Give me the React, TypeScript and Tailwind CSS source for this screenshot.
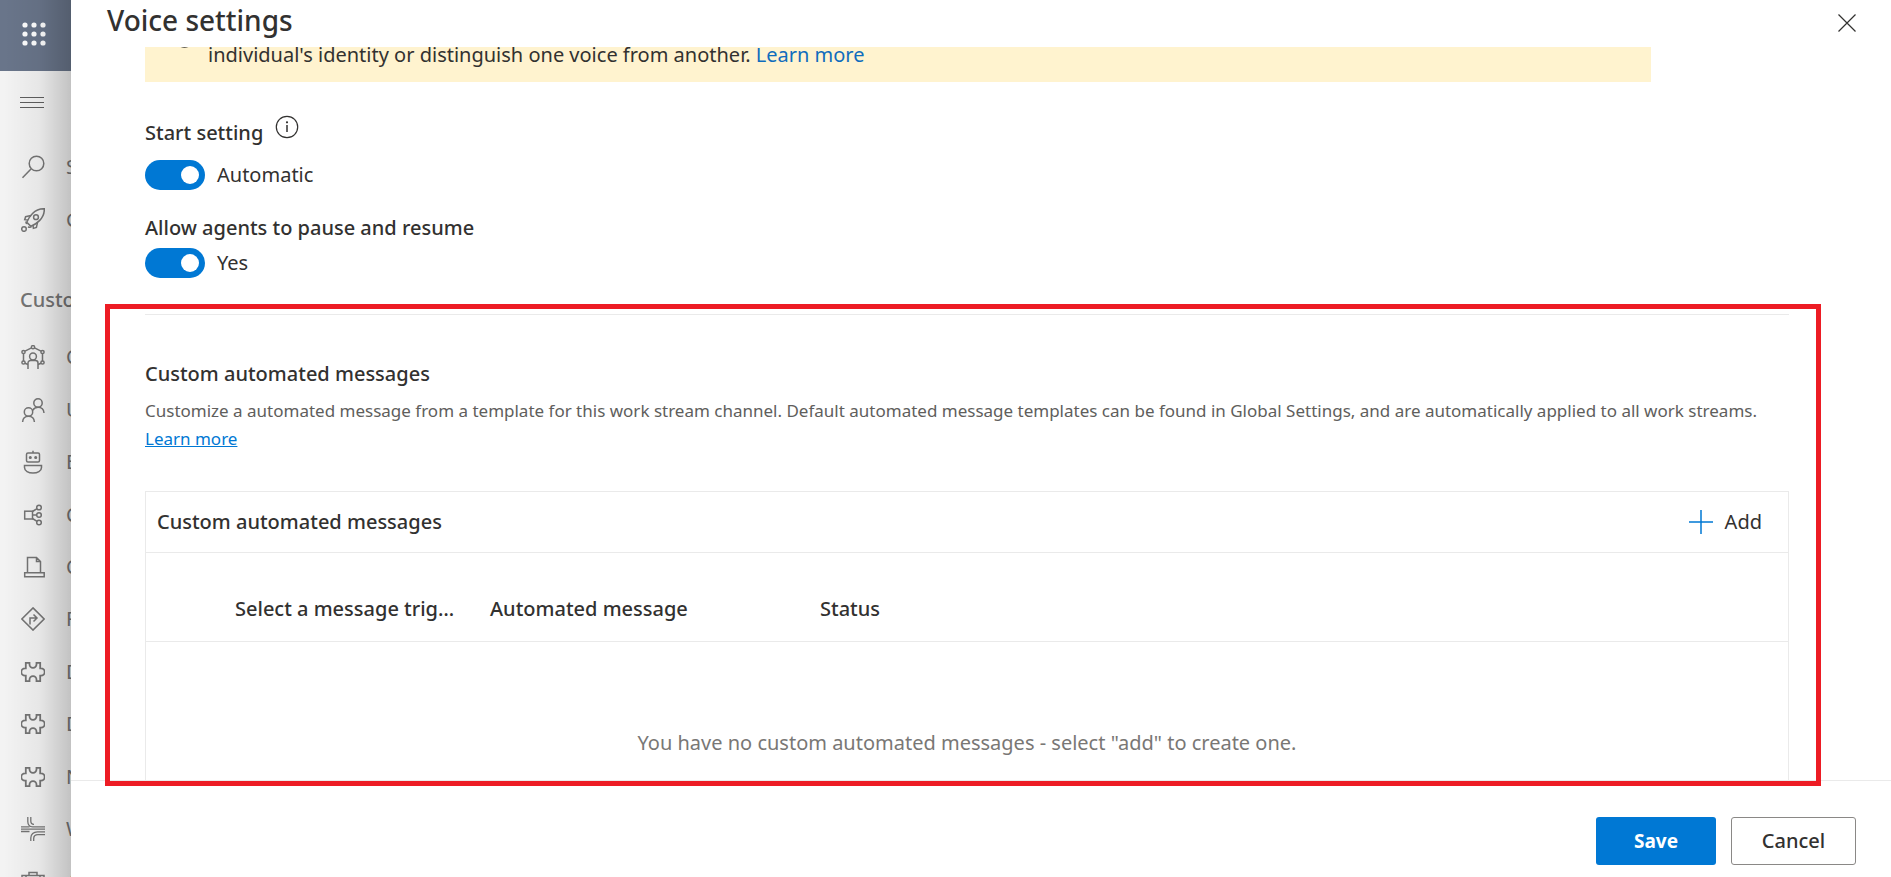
import type { ReactNode } from "react";

function Icon({ children, className = "" }: { children: ReactNode; className?: string }) {
  return (
    <svg viewBox="0 0 24 24" width="24" height="24" fill="none" stroke="currentColor" strokeWidth="1.500" aria-hidden="true" className={`shrink-0 ${className}`}>
      {children}
    </svg>
  );
}

const SearchIcon = () => (
  <Icon>
    <circle cx="15.5" cy="8.5" r="7.3" />
    <path d="M10 14 1.5 22.8" />
  </Icon>
);

const RocketIcon = () => (
  <Icon>
    <path d="M23.3.8C18.5.6 14.6 2.4 11.5 5.6 9 8.2 7.2 10.7 5.8 14.2l4.1 4.1c3.500-1.400 6-3.200 8.600-5.700 3.200-3.200 5-7 4.800-11.800z" />
    <circle cx="15" cy="9.200" r="2.400" />
    <path d="M10 7.500 4.600 8.700 3.700 11.700l3.200.3M16.600 14.200 15.400 19.500l-3 .9-.4-3.300M5.200 13.500c-.9 2 .8 1.900.3 2.700M10.500 18.900c-1.300.7-2.300.4-3.600.1" />
    <circle cx="3" cy="21" r="2.300" />
  </Icon>
);

const AgentNetworkIcon = () => (
  <Icon>
    <circle cx="12" cy="11.500" r="3.400" />
    <path d="M7 24v-6a2.500 2.500 0 0 1 2.500-2.500h5A2.500 2.500 0 0 1 17 18v6" />
    <circle cx="12" cy="2.200" r="1.600" />
    <circle cx="2.500" cy="7" r="1.600" />
    <circle cx="21.500" cy="7" r="1.600" />
    <circle cx="2.500" cy="17.500" r="1.600" />
    <circle cx="21.500" cy="17.500" r="1.600" />
    <path d="M10.500 2.900 4 6.200M13.500 2.900 20 6.200M2.500 8.600v7.300M21.500 8.600v7.300M4 18.200l3 1.300M20 18.200l-3 1.300" />
  </Icon>
);

const UsersIcon = () => (
  <Icon>
    <circle cx="17" cy="5" r="4.200" />
    <circle cx="7.500" cy="14" r="4.200" />
    <path d="M1.600 24c.2-3.500 2.500-5.800 5.900-5.800s5.700 2.300 5.900 5.800M11.700 12.300c1-2 2.700-3.100 5.300-3.100 3.400 0 5.800 2.300 6 5.800" />
  </Icon>
);

const BotIcon = () => (
  <Icon>
    <rect x="5.500" y="3" width="13" height="9" rx="1.500" />
    <path d="M12 .8V3M3.500 15.500h17v2c0 3.500-4 5.500-8.500 5.500s-8.500-2-8.500-5.500z" />
    <circle cx="9.300" cy="7.500" r=".8" fill="currentColor" />
    <circle cx="14.700" cy="7.500" r=".8" fill="currentColor" />
  </Icon>
);

const ShareIcon = () => (
  <Icon>
    <rect x="3.700" y="8.200" width="7.800" height="7.800" />
    <circle cx="18" cy="4.500" r="2.300" />
    <circle cx="18" cy="12" r="2.300" />
    <circle cx="18" cy="19.500" r="2.300" />
    <path d="M11.500 8.500 16 5.600M11.500 12h4.200M11.500 15.500l4.500 2.800" />
  </Icon>
);

const TrayIcon = () => (
  <Icon>
    <path d="M6.500 17.500V2.500h9l4 4v11M15.500 2.500v4h4M5.800 17.700H3.700v4h19.500v-4h-3.200M5.800 17.700h14.700" />
  </Icon>
);

const RouteIcon = () => (
  <Icon>
    <path d="M12 .9 23.100 12 12 23.100.9 12zM9 17.500V11h6.500M12.500 7.500 16 11l-3.500 3.500" />
  </Icon>
);

const PuzzleIcon = () => (
  <svg viewBox="0 0 24 24" width="24" height="24" fill="none" stroke="currentColor" strokeWidth="1.800" aria-hidden="true" className="shrink-0">
    <path d="M4.800 2.900h3.700v1.400a3.500 3.500 0 0 0 7 0V2.900h3.700v5.400h.8a3.200 3.200 0 0 1 0 7.400h-.8v5.400h-3.700v-1.400a3.500 3.500 0 0 0-7 0v1.400H4.800v-5.400H4a3.200 3.200 0 0 1 0-7.400h.8z" />
  </svg>
);

const MergeIcon = () => (
  <Icon>
    <path strokeWidth="1.300" d="M0 9.800h8.500M0 12.100h24M0 14.500h8.500M6.800 0v4.500c0 3.200 1.800 5.300 4.700 5.300H24M9.800 0v4c0 2 1.200 3.400 3.200 3.400M24 14.800h-7.500c-4 0-6.700 2.400-6.700 6.200v3M24 17.600h-7c-2.700 0-4.300 1.500-4.300 4V24" />
  </Icon>
);

const CaseIcon = () => (
  <Icon>
    <path d="M1 5.500h22V22H1zM8 5.500v-3h8v3M5 5.500V22M19 5.500V22" />
  </Icon>
);

const topLinks = [
  { label: "S", icon: <SearchIcon /> },
  { label: "G", icon: <RocketIcon /> },
];

const groupLinks = [
  { label: "C", icon: <AgentNetworkIcon /> },
  { label: "U", icon: <UsersIcon /> },
  { label: "B", icon: <BotIcon /> },
  { label: "C", icon: <ShareIcon /> },
  { label: "C", icon: <TrayIcon /> },
  { label: "R", icon: <RouteIcon /> },
  { label: "D", icon: <PuzzleIcon /> },
  { label: "D", icon: <PuzzleIcon /> },
  { label: "N", icon: <PuzzleIcon /> },
  { label: "W", icon: <MergeIcon /> },
  { label: "A", icon: <CaseIcon /> },
];

function NavLink({ label, icon }: { label: string; icon: ReactNode }) {
  return (
    <li className="flex items-center">
      <a href="#" className="flex items-center gap-[21px] pl-[21px] text-[20px] leading-6">
        {icon}
        <span>{label}</span>
      </a>
    </li>
  );
}

function Rail() {
  return (
    <aside className="relative h-full w-[71px] shrink-0 overflow-hidden bg-[#f3f3f3] text-[#757575]">
      <div className="flex h-[71px] items-center bg-[#69758a] pb-1 pl-[21px]">
        <button type="button" aria-label="App launcher" className="text-white">
          <svg viewBox="0 0 26 26" width="26" height="26" fill="currentColor" aria-hidden="true">
            {[4, 13, 22].map((y) => [4, 13, 22].map((x) => <circle key={`${x}-${y}`} cx={x} cy={y} r="2.600" />))}
          </svg>
        </button>
      </div>
      <nav>
        <button type="button" aria-label="Expand navigation" className="flex h-[62px] items-center pl-5 text-[#5f5f5f]">
          <Icon>
            <path d="M0 7.500h24M0 12.500h24M0 17.500h24" strokeWidth="1" />
          </Icon>
        </button>
        <ul className="grid h-[113px] grid-rows-2 pt-2">
          {topLinks.map((link, i) => (
            <NavLink key={i} {...link} />
          ))}
        </ul>
        <h2 className="pt-[42px] pl-5 text-[20px] leading-6 font-medium">Custo</h2>
        <ul className="mt-[19px] grid h-[577px] grid-rows-11">
          {groupLinks.map((link, i) => (
            <NavLink key={i} {...link} />
          ))}
        </ul>
      </nav>
      <div className="pointer-events-none absolute inset-0 bg-linear-to-r from-transparent from-5% via-black/5 via-55% to-black/20" />
    </aside>
  );
}

function Toggle({ id, label }: { id: string; label: string }) {
  return (
    <div className="flex items-center gap-3">
      <span className="relative flex h-[30px] w-[60px]">
        <input id={id} type="checkbox" role="switch" defaultChecked className="peer h-full w-full cursor-pointer appearance-none rounded-full bg-[#8a8886] checked:bg-[#0078d4]" />
        <span className="pointer-events-none absolute top-1.5 left-1.5 size-[18px] rounded-full bg-white peer-checked:left-9" />
      </span>
      <label htmlFor={id} className="text-[20px] leading-7">{label}</label>
    </div>
  );
}

export default function App() {
  return (
    <div className="flex h-screen overflow-hidden bg-white font-['Noto_Sans','Open_Sans',sans-serif] text-[#323130]">
      <Rail />
      <main className="relative flex min-w-0 flex-1 flex-col">
        <header className="flex h-[47px] shrink-0 items-start justify-between pr-[35px] pl-9">
          <h1 className="text-[28px] leading-10 font-medium">Voice settings</h1>
          <button type="button" aria-label="Close" className="mt-3.5">
            <svg viewBox="0 0 18 18" width="18" height="18" fill="none" stroke="currentColor" strokeWidth="1.200" aria-hidden="true">
              <path d="M.5.5l17 17M17.500.5l-17 17" />
            </svg>
          </button>
        </header>

        <div className="min-h-0 flex-1 overflow-hidden pr-[102px] pl-[74px]">
          <div className="mr-[138px] flex h-[35px] items-end gap-3 overflow-hidden bg-[#fff3cf] pb-[13px] pl-7">
            <svg viewBox="0 0 23 23" width="23" height="23" fill="none" stroke="currentColor" strokeWidth="1.300" aria-hidden="true" className="mb-[21px] shrink-0">
              <circle cx="11.500" cy="11.500" r="10.500" />
            </svg>
            <p className="text-[20px] leading-7">
              individual's identity or distinguish one voice from another.{" "}
              <a href="#" className="text-[#0f6cbd]">Learn more</a>
            </p>
          </div>

          <div className="mt-[33px] flex items-start gap-3">
            <h3 className="pt-1 text-[20px] leading-7 font-medium">Start setting</h3>
            <button type="button" aria-label="About the start setting">
              <svg viewBox="0 0 24 24" width="24" height="24" fill="none" stroke="currentColor" strokeWidth="1.200" aria-hidden="true">
                <circle cx="12" cy="12" r="10.700" />
                <path d="M12 10v7" strokeWidth="1.500" />
                <circle cx="12" cy="7.300" r=".5" fill="currentColor" />
              </svg>
            </button>
          </div>
          <div className="mt-[13px]">
            <Toggle id="start-setting" label="Automatic" />
          </div>
          <h3 className="mt-6 text-[20px] leading-7 font-medium">Allow agents to pause and resume</h3>
          <div className="mt-1.5">
            <Toggle id="pause-resume" label="Yes" />
          </div>

          <hr className="mt-9 border-[#eaeaea]" />
          <h2 className="mt-[45px] text-[20px] leading-7 font-medium">Custom automated messages</h2>
          <p className="mt-[9px] text-[17px] leading-7 text-[#605e5c]">
            Customize a automated message from a template for this work stream channel. Default automated message templates can be found in Global Settings, and are automatically applied to all work streams.{" "}
            <a href="#" className="text-[#0078d4] underline">Learn more</a>
          </p>

          <section className="mt-[38px] h-[320px] border border-[#eaeaea]">
            <div className="flex h-[60px] items-center justify-between pr-[26px] pl-[11px]">
              <h3 className="text-[20px] leading-7 font-medium">Custom automated messages</h3>
              <button type="button" className="flex items-center gap-3 text-[20px] leading-7">
                <svg viewBox="0 0 24 24" width="24" height="24" fill="none" stroke="#0078d4" strokeWidth="1.500" aria-hidden="true">
                  <path d="M12 0v24M0 12h24" />
                </svg>
                Add
              </button>
            </div>
            <table className="w-full table-fixed text-left text-[20px] leading-7">
              <thead>
                <tr className="h-[89px] border-y border-[#eaeaea]">
                  <th scope="col" className="w-[344px] truncate pt-6 pr-8 pl-[89px] font-medium">Select a message trigger</th>
                  <th scope="col" className="w-[330px] pt-6 font-medium">Automated message</th>
                  <th scope="col" className="pt-6 font-medium">Status</th>
                </tr>
              </thead>
              <tbody>
                <tr>
                  <td colSpan={3} className="pt-[87px] text-center text-[#797775]">
                    You have no custom automated messages - select "add" to create one.
                  </td>
                </tr>
              </tbody>
            </table>
          </section>
        </div>

        <footer className="flex h-[97px] shrink-0 items-start justify-end gap-[15px] border-t border-[#eaeaea] pt-9 pr-[35px]">
          <button type="button" className="h-12 w-[120px] rounded-[3px] bg-[#0078d4] text-[19px] leading-7 font-bold text-white">Save</button>
          <button type="button" className="h-12 w-[125px] rounded-[3px] border border-[#8a8886] text-[20px] leading-7 font-medium">Cancel</button>
        </footer>

        <div className="pointer-events-none absolute top-[304px] right-[70px] bottom-[91px] left-[34px] border-5 border-[#ed1c24]" />
      </main>
    </div>
  );
}
